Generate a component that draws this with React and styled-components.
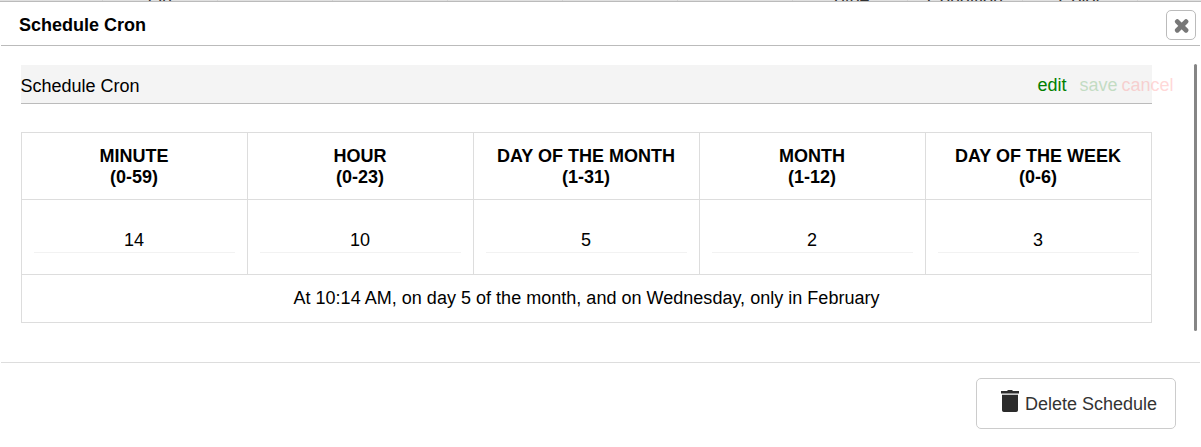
import React from "react";
import styled, { createGlobalStyle } from "styled-components";

const GlobalStyle = createGlobalStyle`
    * {
        box-sizing: border-box;
    }
    body {
        margin: 0;
        background-color: white;
        font-family: "Liberation Sans", Arial, sans-serif;
        font-size: 18px;
        color: black;
        overflow: hidden;
    }
`
const Page = styled.div`
    height: 447px;
    display: flex;
    flex-direction: column;
`
const Behind = styled.div`
    flex: none;
    height: 1px;
    display: grid;
    grid-template-columns: 103px repeat(9, 115px) 1fr;
    grid-template-rows: 1px;
    align-items: end;
    overflow: hidden;
    background-color: #e0e0e0;
    color: #333;
    line-height: 20px;
    text-align: center;
`
const BehindCell = styled.span`
    height: 20px;
    margin-bottom: -9px;
    border-right: 1px solid #d2d2d2;
`
const Modal = styled.section`
    flex: 1;
    display: flex;
    flex-direction: column;
    border-top: 1px solid #bbb;
`
const Head = styled.header`
    height: 44px;
    margin: 0 1px;
    padding: 0 4px 0 18px;
    display: flex;
    align-items: center;
    justify-content: space-between;
    border-bottom: 1px solid #bbb;
`
const Title = styled.h1`
    margin: 0 0 -2px;
    font-size: 18px;
    line-height: 20px;
`
const CloseButton = styled.button`
    width: 30px;
    height: 30px;
    margin-top: 3px;
    padding: 1px 0 0 1px;
    display: flex;
    align-items: center;
    justify-content: center;
    border: 1px solid #bbb;
    border-radius: 5px;
    background-color: white;
`
const Body = styled.div`
    height: 316px;
    padding: 18px 4px 0 21px;
    display: flex;
    justify-content: space-between;
`
const Content = styled.main`
    width: 1131px;
    padding-top: 1px;
`
const Thumb = styled.div`
    width: 3px;
    height: 267px;
    border-radius: 2px;
    background-color: #858585;
`
const Bar = styled.div`
    height: 39px;
    display: flex;
    justify-content: space-between;
    border-bottom: 1px solid #bbb;
    background-color: #f4f4f4;
    line-height: 20px;
    padding-top: 11px;
    white-space: nowrap;
`
const BarTitle = styled.span`
    margin-left: -0.5px;
`
const Actions = styled.div`
    width: 114.5px;
    margin-top: -1px;
    display: flex;
`
const Action = styled.span`
    color: ${props => props.$color};
    opacity: ${props => props.$off ? 0.2 : 1};
    margin-right: ${props => props.$gap || 0}px;
`
const Table = styled.table`
    width: 1131px;
    margin-top: 28px;
    table-layout: fixed;
    border-collapse: collapse;
    text-align: center;
`
const Th = styled.th`
    height: 67px;
    padding: 2px 1px 0 0;
    border: 1px solid #ddd;
    line-height: 21px;
`
const Td = styled.td`
    height: ${props => props.$height}px;
    padding: 0 12px 2px 12px;
    border: 1px solid #ddd;
    line-height: 20px;
`
const Field = styled.div`
    height: 30px;
    margin-top: 4px;
    padding: 7px 1px 0 0;
    border-bottom: 1px solid #f2f2f2;
`
const Summary = styled.span`
    letter-spacing: 0.02px;
`
const Foot = styled.footer`
    flex: 1;
    margin: 0 1px;
    padding: 15px 24px 0 0;
    display: flex;
    justify-content: flex-end;
    align-items: flex-start;
    border-top: 1px solid #ddd;
`
const DeleteButton = styled.button`
    width: 200px;
    height: 51px;
    padding: 2px 0 0 24px;
    display: flex;
    align-items: center;
    gap: 6px;
    border: 1px solid #ccc;
    border-radius: 5px;
    background-color: white;
    color: #333;
    font-family: inherit;
    font-size: 18px;
    white-space: nowrap;
`
const TrashIcon = styled.svg`
    flex: none;
    margin-top: -8px;
`

const columns = [
    { name: "MINUTE", range: "(0-59)", value: "14" },
    { name: "HOUR", range: "(0-23)", value: "10" },
    { name: "DAY OF THE MONTH", range: "(1-31)", value: "5" },
    { name: "MONTH", range: "(1-12)", value: "2" },
    { name: "DAY OF THE WEEK", range: "(0-6)", value: "3" },
]

const behindCells = ["", "On", "", "", "", "", "", "Type", "Condition", "Color"]

export default function App() {
    return (
        <Page>
            <GlobalStyle />
            <Behind>
                {behindCells.map((text, i) => <BehindCell key={i}>{text}</BehindCell>)}
            </Behind>
            <Modal>
                <Head>
                    <Title>Schedule Cron</Title>
                    <CloseButton aria-label="Close">
                        <svg width="16" height="16" viewBox="0 0 16 16">
                            <path d="M3.3 3.6 12 12.200M12 3.6 3.3 12.200" stroke="#777" strokeWidth="4.8" strokeLinecap="round" />
                        </svg>
                    </CloseButton>
                </Head>
                <Body>
                    <Content>
                        <Bar>
                            <BarTitle>Schedule Cron</BarTitle>
                            <Actions>
                                <Action $color="green" $gap={13}>edit</Action>
                                <Action $color="green" $off $gap={4}>save</Action>
                                <Action $color="#ff4040" $off>cancel</Action>
                            </Actions>
                        </Bar>
                        <Table>
                            <thead>
                                <tr>
                                    {columns.map(col => <Th key={col.name}>{col.name}<br />{col.range}</Th>)}
                                </tr>
                            </thead>
                            <tbody>
                                <tr>
                                    {columns.map(col => <Td key={col.name} $height={75}><Field>{col.value}</Field></Td>)}
                                </tr>
                                <tr>
                                    <Td colSpan={5} $height={48}>
                                        <Summary>At 10:14 AM, on day 5 of the month, and on Wednesday, only in February</Summary>
                                    </Td>
                                </tr>
                            </tbody>
                        </Table>
                    </Content>
                    <Thumb />
                </Body>
                <Foot>
                    <DeleteButton>
                        <TrashIcon width="18" height="22" viewBox="0 0 18 22">
                            <path d="M6.500 0h5v1h6.500v2.500H0V1h6.500zM1 4.700h16v15.500a1.800 1.800 0 0 1-1.800 1.800H2.800A1.800 1.800 0 0 1 1 20.200z" fill="#2b2b2b" />
                        </TrashIcon>
                        Delete Schedule
                    </DeleteButton>
                </Foot>
            </Modal>
        </Page>
    )
}
